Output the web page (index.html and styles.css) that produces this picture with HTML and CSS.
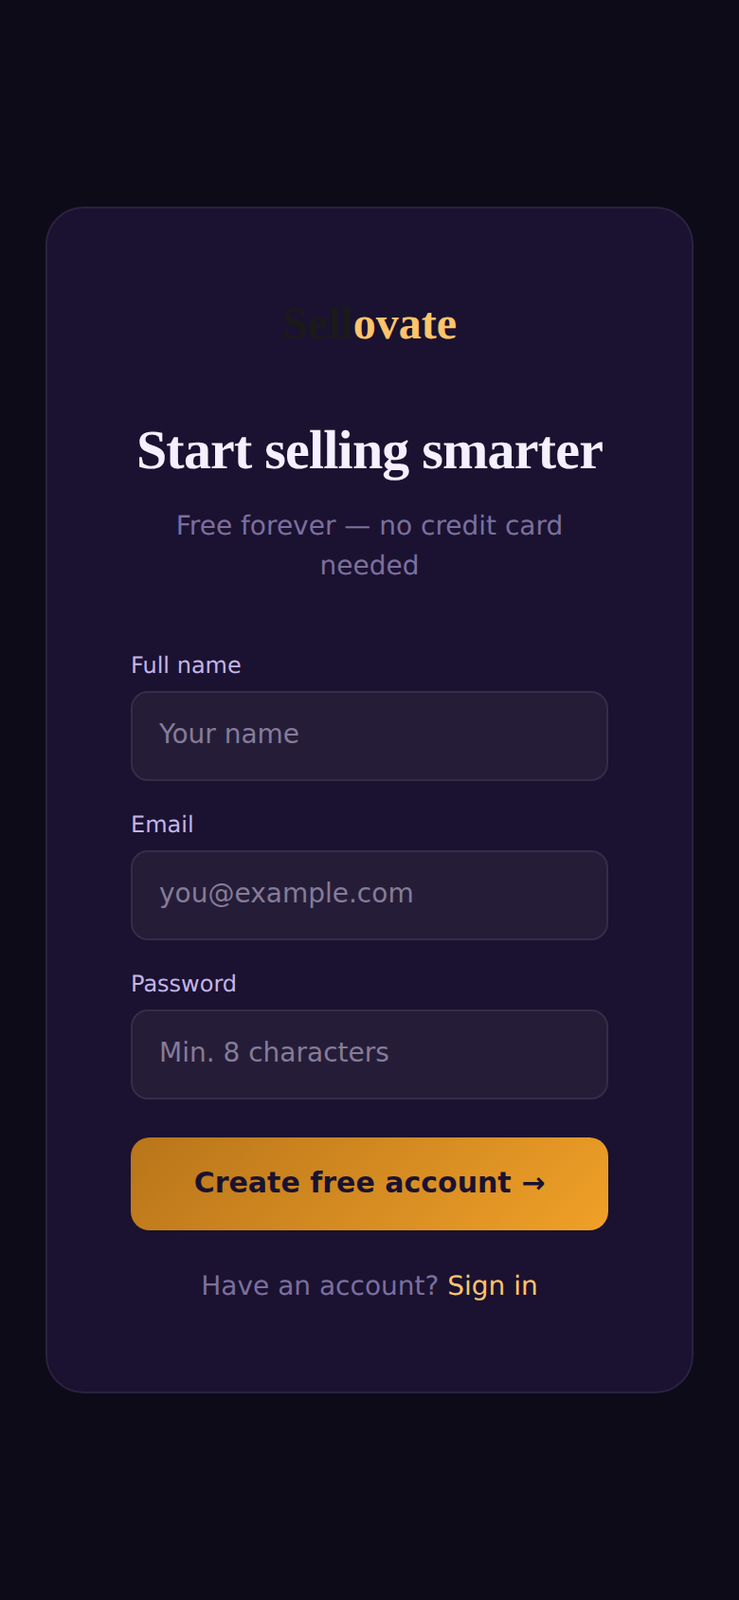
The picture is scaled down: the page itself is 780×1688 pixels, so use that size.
FILE: index.html
```html
<!DOCTYPE html>
<html lang="en">
<head>
    <meta charset="UTF-8">
    <meta name="viewport" content="width=device-width, initial-scale=1.0">
    <title>Sellovate - Sign up</title>
    <link rel="stylesheet" href="styles.css">
</head>
<body>
    <main class="card">
        <div class="logo">Sell<span>ovate</span></div>
        <h1>Start selling smarter</h1>
        <p class="sub">Free forever — no credit card needed</p>

        <form class="signup">
            <div class="field">
                <label for="name">Full name</label>
                <input type="text" id="name" placeholder="Your name">
            </div>
            <div class="field">
                <label for="email">Email</label>
                <input type="email" id="email" placeholder="you@example.com">
            </div>
            <div class="field">
                <label for="password">Password</label>
                <input type="password" id="password" placeholder="Min. 8 characters">
            </div>
            <button type="submit">Create free account →</button>
        </form>

        <p class="switch">Have an account? <a href="#">Sign in</a></p>
    </main>
</body>
</html>
```

FILE: styles.css
```css
* {
    box-sizing: border-box;
}

body {
    margin: 0;
    min-height: 1688px;
    padding: 0 48px;
    display: flex;
    align-items: center;
    background: #0d0b18;
    font-family: "DejaVu Sans", sans-serif;
    text-rendering: geometricPrecision;
}

.card {
    width: 100%;
    padding: 92px 88px 90px;
    background: #1a1230;
    border: 2px solid #2a2240;
    border-radius: 40px;
    text-align: center;
}

.logo {
    font-family: "Liberation Serif", serif;
    font-size: 48px;
    font-weight: 700;
    line-height: 60px;
    color: #1a1a1a;
    margin-bottom: 67px;
}

.logo span {
    color: #ffc46b;
}

h1 {
    font-family: "Liberation Serif", serif;
    font-size: 58px;
    font-weight: 700;
    line-height: 72px;
    letter-spacing: -0.8px;
    color: #f5f0ff;
    margin: 0 0 23px;
}

.sub {
    font-size: 28px;
    line-height: 42px;
    color: #7c6f9e;
    margin: 0 0 70px;
}

.signup {
    text-align: left;
}

.field {
    margin-bottom: 32px;
}

label {
    display: block;
    font-size: 24px;
    line-height: 28px;
    color: #c4b5e8;
    margin-bottom: 13px;
}

input {
    display: block;
    width: 100%;
    height: 95px;
    padding: 0 28px 4px;
    background: #251d38;
    border: 2px solid #352d48;
    border-radius: 18px;
    font-family: inherit;
    font-size: 28px;
    color: #f5f0ff;
}

input::placeholder {
    color: #857c98;
    opacity: 1;
}

button {
    display: block;
    width: 100%;
    height: 98px;
    margin-top: 40px;
    padding: 0 0 4px;
    background: linear-gradient(135deg, #b8751a, #f0a028);
    border: none;
    border-radius: 20px;
    font-family: inherit;
    font-size: 30px;
    font-weight: 700;
    color: #1a1230;
    cursor: pointer;
}

.switch {
    font-size: 28px;
    line-height: 42px;
    color: #7c6f9e;
    margin: 38px 0 0;
}

.switch a {
    color: #ffc46b;
    text-decoration: none;
}
```
